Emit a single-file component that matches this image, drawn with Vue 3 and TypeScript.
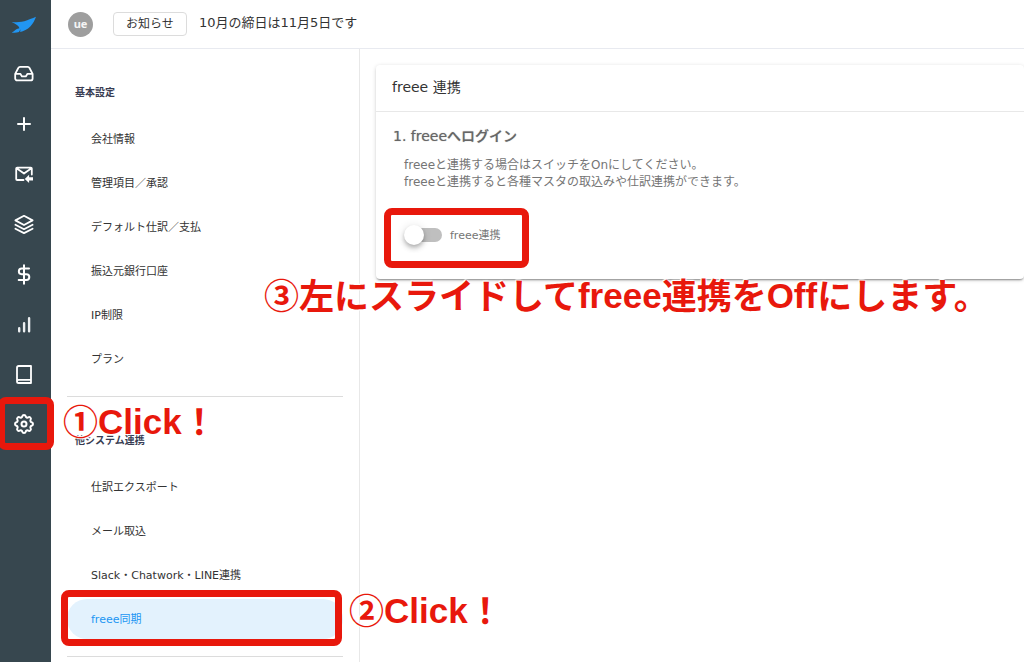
<script setup lang="ts">
import { ref } from 'vue'

interface Section {
  title: string
  items: string[]
}

const sections: Section[] = [
  {
    title: '基本設定',
    items: ['会社情報', '管理項目／承認', 'デフォルト仕訳／支払', '振込元銀行口座', 'IP制限', 'プラン'],
  },
  {
    title: '他システム連携',
    items: ['仕訳エクスポート', 'メール取込', 'Slack・Chatwork・LINE連携', 'freee同期'],
  },
]

const current = ref('freee同期')
const linked = ref(false)
</script>

<template>
  <div class="app">
    <nav class="rail" aria-label="メインメニュー">
      <a class="logo" href="#" aria-label="ホーム">
        <svg viewBox="0 0 26 18" width="26" height="18">
          <path
            d="M.6 6.2C5 6.2 9 6.3 13.300 5.200C17 4.200 21.500 2.200 25 .8C23.600 4 22.500 7.500 19.300 10.500C16.600 13.200 12.500 15.600 9.200 15.900L9.400 13.200L8 15.900C5.500 16.800 2.800 16.900.7 16.400C2.800 15.400 4.300 13.800 5.800 12.900L8.400 12.300C7.800 9.200 4 7.600.6 6.200Z"
          />
        </svg>
      </a>
      <button type="button" aria-label="受信箱">
        <svg viewBox="0 0 24 24">
          <path d="M3.200 11.800 6.300 6Q6.800 4.900 8 4.900H15.800Q17 4.900 17.500 6L20.600 11.800V16.400a2 2 0 0 1-2 2H5.200a2 2 0 0 1-2-2ZM3.200 11.800H8.300L10 14.400H13.800L15.500 11.800H20.600" />
        </svg>
      </button>
      <button type="button" aria-label="追加">
        <svg viewBox="0 0 24 24"><path class="bold" d="M12 6V18M6 12H18" /></svg>
      </button>
      <button type="button" aria-label="メール取込">
        <svg viewBox="0 0 24 24">
          <path d="M11.500 18H5.200a1 1 0 0 1-1-1V6.600a1 1 0 0 1 1-1H18.800a1 1 0 0 1 1 1V12.500M4.600 6.300 12 11.600 19.400 6.300" />
          <path class="solid" d="M12.800 16.900 17.100 12.800V15.300H21V18.500H17.100V21Z" />
        </svg>
      </button>
      <button type="button" aria-label="マスタ">
        <svg viewBox="0 0 24 24">
          <path d="M12 3.800 20.600 8.400 12 13 3.400 8.400ZM3.400 12.800 12 17.200 20.600 12.800M3.400 16.700 12 21.100 20.600 16.700" />
        </svg>
      </button>
      <button type="button" aria-label="支払">
        <svg viewBox="0 0 24 24">
          <path class="bold" d="M12 3.200V21.800M17 6.500H9.700a2.850 2.850 0 0 0 0 5.700h4.700a2.900 2.900 0 0 1 0 5.800H6.700" />
        </svg>
      </button>
      <button type="button" aria-label="レポート">
        <svg viewBox="0 0 24 24">
          <path class="bars" d="M7.200 16.200V19.300M12.100 11.200V19.300M17.100 6.200V19.300" />
        </svg>
      </button>
      <button type="button" aria-label="帳簿">
        <svg viewBox="0 0 24 24">
          <path d="M5 19.400V5.800a1.800 1.800 0 0 1 1.800-1.800H19V21H6.600a1.600 1.600 0 0 1 0-3.200H19" />
        </svg>
      </button>
      <button type="button" class="marked" aria-label="設定">
        <svg viewBox="0 0 24 24">
          <path
            class="bold"
            d="M10.325 4.317c.426-1.756 2.924-1.756 3.350 0a1.724 1.724 0 0 0 2.573 1.066c1.543-.94 3.310.826 2.370 2.370a1.724 1.724 0 0 0 1.065 2.572c1.756.426 1.756 2.924 0 3.350a1.724 1.724 0 0 0-1.066 2.573c.94 1.543-.826 3.310-2.370 2.370a1.724 1.724 0 0 0-2.572 1.065c-.426 1.756-2.924 1.756-3.350 0a1.724 1.724 0 0 0-2.573-1.066c-1.543.94-3.310-.826-2.370-2.370a1.724 1.724 0 0 0-1.065-2.572c-1.756-.426-1.756-2.924 0-3.350a1.724 1.724 0 0 0 1.066-2.573c-.94-1.543.826-3.310 2.370-2.370c1 .608 2.296.07 2.572-1.065z"
          />
          <circle class="bold" cx="12" cy="12" r="2.500" />
        </svg>
        <span class="frame frame-gear"></span>
      </button>
    </nav>

    <div class="page">
      <header class="topbar">
        <span class="avatar">ue</span>
        <button type="button" class="news">お知らせ</button>
        <p class="notice">10月の締日は11月5日です</p>
      </header>

      <div class="body">
        <aside class="menu">
          <section v-for="(section, i) in sections" :key="section.title">
            <h2>{{ section.title }}</h2>
            <ul>
              <li v-for="item in section.items" :key="item">
                <a href="#" :class="{ active: item === current }" @click.prevent="current = item">{{ item }}</a>
                <template v-if="item === 'freee同期'">
                  <span class="frame frame-item"></span>
                  <strong class="note note-item"><span>②</span>Click<span>！</span></strong>
                </template>
              </li>
            </ul>
            <strong v-if="i === 1" class="note note-gear"><span>①</span>Click<span>！</span></strong>
          </section>
        </aside>

        <main>
          <article class="card">
            <h1>freee 連携</h1>
            <div class="content">
              <h3>1. freeeへログイン</h3>
              <p>
                freeeと連携する場合はスイッチをOnにしてください。<br />
                freeeと連携すると各種マスタの取込みや仕訳連携ができます。
              </p>
              <div class="switch">
                <input id="link-freee" v-model="linked" type="checkbox" role="switch" />
                <label for="link-freee">freee連携</label>
                <span class="frame frame-switch"></span>
              </div>
            </div>
            <strong class="note note-switch"><span>③左にスライドして</span>freee<span>連携を</span>Off<span>にします。</span></strong>
          </article>
        </main>
      </div>
    </div>
  </div>
</template>

<style>
body {
  margin: 0;
  background: #fff;
}
</style>

<style scoped>
.app {
  display: flex;
  min-height: 100vh;
  overflow: hidden;
  font-family: 'DejaVu Sans', 'Noto Sans CJK JP', sans-serif;
  font-size: 11px;
  color: #333;
}

h1,
h2,
h3,
p,
ul {
  margin: 0;
  padding: 0;
}

ul {
  list-style: none;
}

.rail {
  flex: none;
  width: 51px;
  background: #37474f;
}

.rail button,
.logo {
  position: relative;
  display: flex;
  align-items: center;
  justify-content: center;
  width: 48px;
  height: 50px;
  padding: 0;
  border: 0;
  background: none;
}

.rail .logo {
  height: 49px;
}

.logo path {
  fill: #2196f3;
}

.rail button svg {
  width: 24px;
  height: 24px;
  fill: none;
  stroke: #fff;
  stroke-width: 1.8;
  stroke-linecap: round;
  stroke-linejoin: round;
}

.rail .solid {
  fill: #fff;
  stroke: none;
}

.rail .bold {
  stroke-width: 2;
}

.rail .bars {
  stroke-width: 2.4;
  stroke: #eceff1;
}

.page {
  flex: 1;
  min-width: 0;
  display: flex;
  flex-direction: column;
}

.topbar {
  display: flex;
  align-items: center;
  height: 48px;
  padding: 0 17px;
  border-bottom: 1px solid #e8eaf0;
}

.avatar {
  width: 25px;
  height: 25px;
  margin-right: 20px;
  border-radius: 50%;
  background: #9e9e9e;
  color: #f5f5f5;
  font: bold 11px/24px 'Noto Sans', sans-serif;
  text-align: center;
}

.news {
  height: 24px;
  width: 74px;
  margin-right: 12px;
  padding: 0 0 2px;
  border: 1px solid #dcdcdc;
  border-radius: 4px;
  background: #fff;
  color: #333;
  font: 12px/20px 'Noto Sans CJK JP', sans-serif;
}

.notice {
  padding-bottom: 2px;
  font-size: 13px;
  line-height: 20px;
}

.body {
  flex: 1;
  display: flex;
}

.menu {
  flex: none;
  box-sizing: border-box;
  width: 309px;
  padding: 0 16px;
  border-right: 1px solid #e8e8e8;
}

.menu section {
  position: relative;
  padding: 36px 0 17px;
  border-bottom: 1px solid #dcdcdc;
}

.menu h2 {
  margin-bottom: 18px;
  padding-left: 8px;
  font-size: 10px;
  line-height: 16px;
  color: #383c52;
}

.menu ul {
  display: grid;
  gap: 4px;
}

.menu li {
  position: relative;
}

.menu a {
  display: block;
  padding: 2px 24px 0;
  border-radius: 20px;
  line-height: 38px;
  color: #333;
  text-decoration: none;
}

.menu a.active {
  background: #e3f2fd;
  color: #2196f3;
}

main {
  flex: 1;
  min-width: 0;
  padding: 16px 0 0 16px;
}

.card {
  position: relative;
  border-radius: 4px;
  background: #fff;
  box-shadow: 0 2px 2px -1px rgba(0, 0, 0, 0.4), 0 1px 4px rgba(0, 0, 0, 0.16);
}

.card h1 {
  padding: 12px 16px 14px;
  border-bottom: 1px solid #e8e8e8;
  font-size: 14px;
  font-weight: 400;
  line-height: 20px;
}

.content {
  padding: 14px 17px 34px;
  color: #757575;
}

.content h3 {
  margin-bottom: 11px;
  font-size: 14px;
  font-weight: 500;
  line-height: 20px;
  color: #666;
  text-shadow: 0 0 1px #999;
}

.content p {
  padding-left: 11px;
  font-size: 12px;
  line-height: 17px;
}

.switch {
  position: relative;
  display: flex;
  align-items: center;
  width: 122px;
  height: 20px;
  margin: 34px 0 0 11px;
}

.switch label {
  padding-bottom: 3px;
}

.switch input {
  appearance: none;
  position: relative;
  width: 36px;
  height: 14px;
  margin: 0 8px 0 2px;
  border-radius: 7px;
  background: #bfbfbf;
}

.switch input::before {
  content: '';
  position: absolute;
  top: -3px;
  left: -2px;
  width: 20px;
  height: 20px;
  border-radius: 50%;
  background: #fff;
  box-shadow: 0 2px 4px -1px rgba(0, 0, 0, 0.2), 0 4px 5px rgba(0, 0, 0, 0.14), 0 1px 10px rgba(0, 0, 0, 0.12);
}

.switch input:checked {
  background: #90caf9;
}

.switch input:checked::before {
  left: 18px;
  background: #2196f3;
}

/* Tutorial overlay: red frames and step captions */
.frame {
  position: absolute;
  z-index: 2;
  box-sizing: border-box;
  border: 7px solid #e8180c;
  border-radius: 8px;
  pointer-events: none;
}

.frame-gear {
  top: -2px;
  left: -2px;
  width: 56px;
  height: 53px;
}

.frame-item {
  top: -9px;
  left: -6px;
  right: 1px;
  height: 56px;
}

.frame-switch {
  top: -17px;
  left: -20px;
  width: 145px;
  height: 60px;
}

.note {
  position: absolute;
  z-index: 3;
  display: flex;
  color: #e8180c;
  font: bold 35px/40px 'Liberation Sans', sans-serif;
  white-space: nowrap;
  text-shadow: 0 0 2px #fff, 0 0 2px #fff, 1px 1px 1px #fff, -1px -1px 1px #fff;
  pointer-events: none;
}

.note span {
  font-family: 'Noto Sans CJK JP', sans-serif;
  line-height: 36px;
}

.note-gear {
  top: 5px;
  left: -4px;
}

.note-item {
  top: -8px;
  left: 282px;
}

.note-switch {
  top: 211px;
  left: -112px;
}
</style>
